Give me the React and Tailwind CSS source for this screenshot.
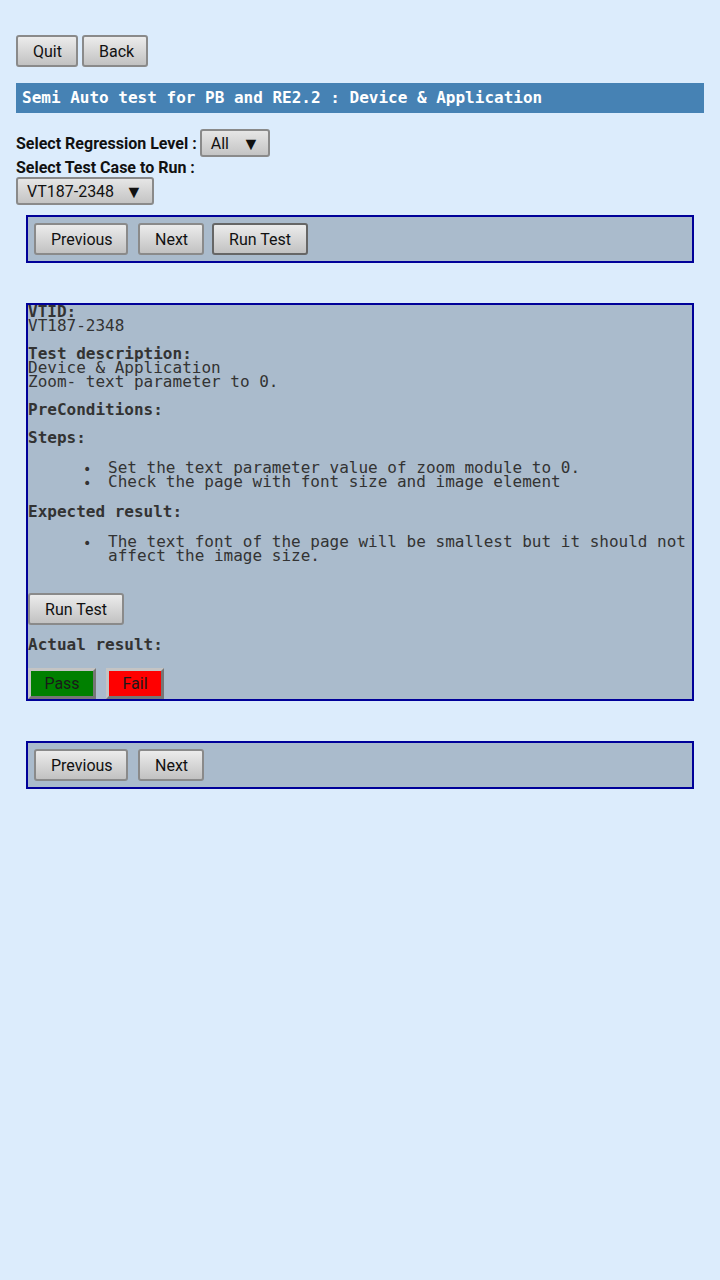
import React from "react";

const btn =
  "h-[32px] px-[15px] rounded-[3px] border-2 border-[#8a8a8a] bg-gradient-to-b from-[#ececec] to-[#c2c2c2] text-[16px] text-[#111] leading-none pt-[1px]";
const sel =
  "h-[28px] rounded-[3px] border-2 border-[#8a8a8a] bg-gradient-to-b from-[#e6e6e6] to-[#c4c4c4] text-[16px] text-[#111] flex items-center leading-none pt-[1px]";

function Bullet({ children }) {
  return (
    <li className="flex">
      <span className="w-[25px] shrink-0 ml-[55px] text-[14px] leading-[14px] relative top-[1px]">•</span>
      <span>{children}</span>
    </li>
  );
}

export default function App() {
  return (
    <div
      className="min-h-[1280px] bg-[#dcecfc] px-[16px] pt-[35px]"
      style={{ fontFamily: "Roboto, 'Liberation Sans', sans-serif" }}
    >
      <div className="flex gap-[4px]">
        <button className={btn + " w-[62px] px-0"}>Quit</button>
        <button className={btn + " w-[66px] px-0"}>Back</button>
      </div>

      <div
        className="mt-[16px] h-[30px] bg-[#4682b4] text-white font-bold text-[16px] flex items-center pl-[6px]"
        style={{ fontFamily: "'DejaVu Sans Mono', monospace" }}
      >
        Semi Auto test for PB and RE2.2 : Device &amp; Application
      </div>

      <div className="mt-[16px] flex items-center">
        <span className="font-bold text-[16px] text-[#111] mr-[3px] pt-[1px]">
          Select Regression Level :
        </span>
        <div className={sel + " w-[70px] pl-[9px]"}>
          <span>All</span>
          <span className="ml-[13px] text-[18px]">▼</span>
        </div>
      </div>
      <div className="font-bold text-[16px] text-[#111] leading-[20px] pt-[1px]">
        Select Test Case to Run :
      </div>
      <div className={sel + " w-[138px] pl-[9px] -mt-[1px]"}>
        <span>VT187-2348</span>
        <span className="ml-[11px] text-[18px]">▼</span>
      </div>

      <div className="mx-[10px] mt-[10px] h-[48px] border-2 border-[#000099] bg-[#aabbcc] flex items-center pl-[6px] gap-[10px]">
        <button className={btn + " w-[94px] px-0"}>Previous</button>
        <button className={btn + " w-[66px] px-0"}>Next</button>
        <button className={btn + " w-[96px] px-0 border-[#666] -ml-[2px]"}>Run Test</button>
      </div>

      <div
        className="mx-[10px] mt-[40px] h-[398px] border-2 border-[#000099] bg-[#aabbcc] text-[#333] text-[16px] leading-[14px] overflow-hidden"
        style={{ fontFamily: "'DejaVu Sans Mono', monospace" }}
      >
        <div>
          <div className="font-bold">VTID:</div>
          <div>VT187-2348</div>
          <div className="h-[14px]" />
          <div className="font-bold">Test description:</div>
          <div>Device &amp; Application</div>
          <div>Zoom- text parameter to 0.</div>
          <div className="h-[14px]" />
          <div className="font-bold">PreConditions:</div>
          <div className="h-[14px]" />
          <div className="font-bold">Steps:</div>
          <ul className="mt-[16px]">
            <Bullet>Set the text parameter value of zoom module to 0.</Bullet>
            <Bullet>Check the page with font size and image element</Bullet>
          </ul>
          <div className="font-bold mt-[16px]">Expected result:</div>
          <ul className="mt-[16px] pr-[2px]">
            <Bullet>
              The text font of the page will be smallest but it should not affect the image size.
            </Bullet>
          </ul>
          <div className="mt-[30px]">
            <button
              className={btn + " w-[96px] px-0"}
              style={{ fontFamily: "Roboto, 'Liberation Sans', sans-serif" }}
            >
              Run Test
            </button>
          </div>
          <div className="font-bold mt-[13px]">Actual result:</div>
          <div
            className="mt-[16px] flex gap-[10px]"
            style={{ fontFamily: "Roboto, 'Liberation Sans', sans-serif" }}
          >
            <button className="w-[68px] h-[31px] bg-[#008000] border-[3px] border-t-[#c4c4c4] border-l-[#c4c4c4] border-b-[#767676] border-r-[#767676] text-[16px] text-[#1a1a1a] leading-none">
              Pass
            </button>
            <button className="w-[58px] h-[31px] bg-[#ff0000] border-[3px] border-t-[#c4c4c4] border-l-[#c4c4c4] border-b-[#767676] border-r-[#767676] text-[16px] text-[#1a1a1a] leading-none">
              Fail
            </button>
          </div>
        </div>
      </div>

      <div className="mx-[10px] mt-[40px] h-[48px] border-2 border-[#000099] bg-[#aabbcc] flex items-center pl-[6px] gap-[10px]">
        <button className={btn + " w-[94px] px-0"}>Previous</button>
        <button className={btn + " w-[66px] px-0"}>Next</button>
      </div>
    </div>
  );
}
